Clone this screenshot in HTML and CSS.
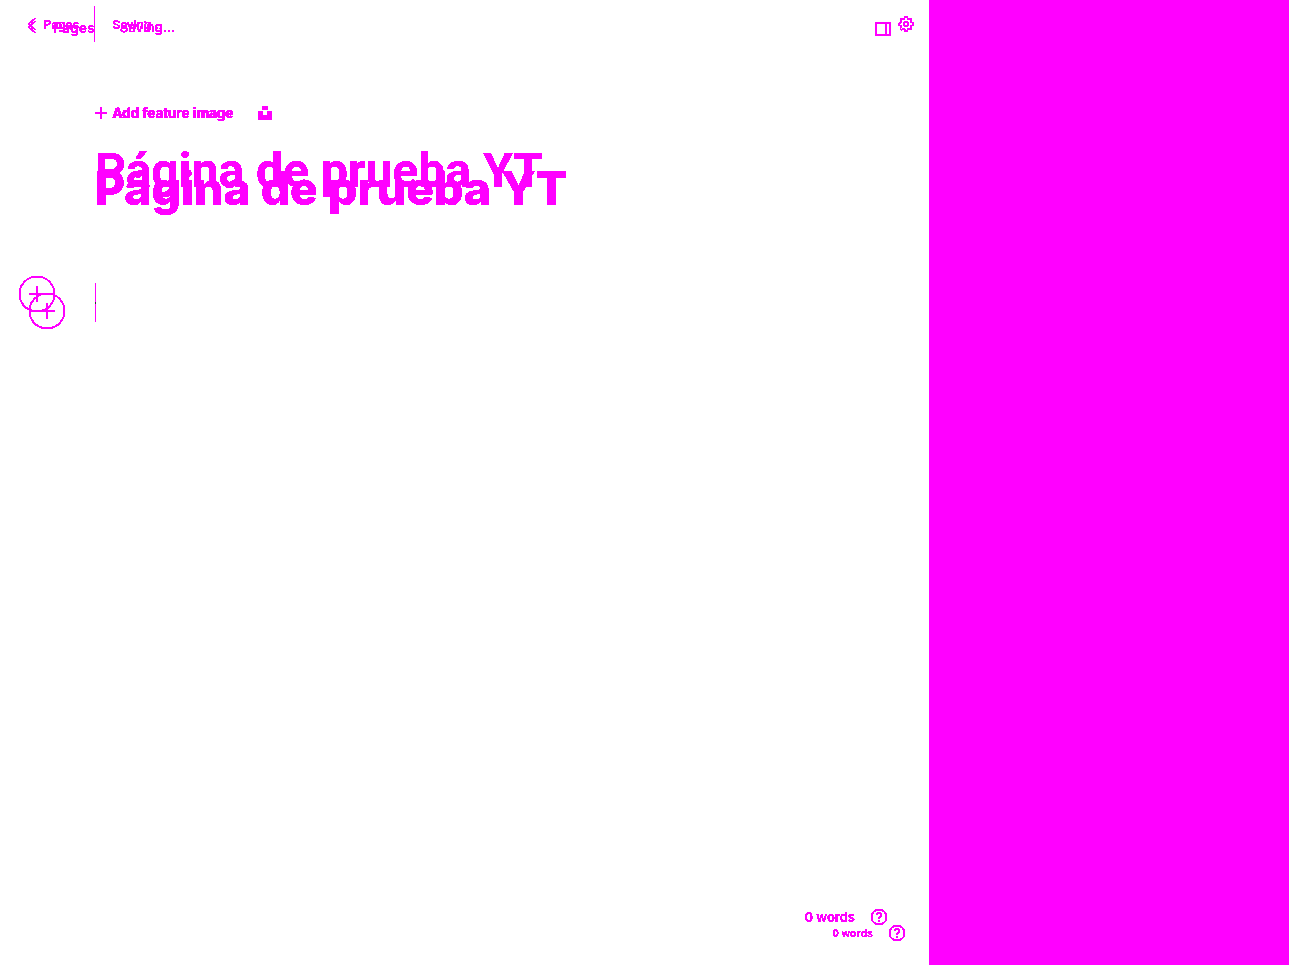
FILE: index.html
```html
<!DOCTYPE html>
<html lang="en">
  <head>
    <meta charset="UTF-8" />
    <title>Página de prueba YT</title>
    <link rel="stylesheet" href="styles.css">
  </head>
  <body>
    <svg class="defs" width="0" height="0">
      <filter id="hard-edge" color-interpolation-filters="sRGB">
        <feComponentTransfer>
          <feFuncA type="discrete" tableValues="0 1 1 1" />
        </feComponentTransfer>
      </filter>
    </svg>
    <main class="editor">
      <!-- first layer -->
      <section class="layer layer-a">
        <header class="topbar">
          <svg class="back" width="10" height="14" viewBox="0 0 10 14"><path d="M8.500 1L1.500 7l7 6" /></svg>
          <span class="crumb">Pages</span>
          <span class="divider"></span>
          <span class="status">Saving...</span>
          <svg class="gear" width="16" height="16" viewBox="0 0 24 24">
            <circle cx="12" cy="12" r="3" />
            <path d="M19.400 15a1.650 1.650 0 0 0 .33 1.820l.06.06a2 2 0 0 1 0 2.830 2 2 0 0 1-2.830 0l-.06-.06a1.650 1.650 0 0 0-1.820-.33 1.650 1.650 0 0 0-1 1.510V21a2 2 0 0 1-2 2 2 2 0 0 1-2-2v-.09A1.650 1.650 0 0 0 9 19.400a1.650 1.650 0 0 0-1.820.33l-.06.06a2 2 0 0 1-2.830 0 2 2 0 0 1 0-2.830l.06-.06a1.650 1.650 0 0 0 .33-1.820 1.650 1.650 0 0 0-1.510-1H3a2 2 0 0 1-2-2 2 2 0 0 1 2-2h.09A1.650 1.650 0 0 0 4.600 9a1.650 1.650 0 0 0-.33-1.820l-.06-.06a2 2 0 0 1 0-2.830 2 2 0 0 1 2.830 0l.06.06a1.650 1.650 0 0 0 1.820.33H9a1.650 1.650 0 0 0 1-1.510V3a2 2 0 0 1 2-2 2 2 0 0 1 2 2v.09a1.650 1.650 0 0 0 1 1.510 1.650 1.650 0 0 0 1.820-.33l.06-.06a2 2 0 0 1 2.830 0 2 2 0 0 1 0 2.830l-.06.06a1.650 1.650 0 0 0-.33 1.820V9a1.650 1.650 0 0 0 1.510 1H21a2 2 0 0 1 2 2 2 2 0 0 1-2 2h-.09a1.650 1.650 0 0 0-1.510 1z" />
          </svg>
        </header>
        <div class="feature">
          <svg class="plus-small" width="12" height="12" viewBox="0 0 12 12"><path d="M6 0v12M0 6h12" /></svg>
          <span class="feature-label">Add feature image</span>
          <svg class="upload" width="14" height="14" viewBox="0 0 14 14"><path d="M4 0h6v4H4zM0 5h5v4h4V5h5v9H0z" /></svg>
        </div>
        <h1 class="title">Página de prueba YT</h1>
        <div class="body-row">
          <svg class="add" width="36" height="36" viewBox="0 0 36 36">
            <circle cx="18" cy="18" r="17.500" />
            <path d="M18 10v16M10 18h16" />
          </svg>
          <span class="caret"></span>
        </div>
        <footer class="foot">
          <span class="words">0 words</span>
          <svg class="help" width="18" height="18" viewBox="0 0 18 18">
            <circle cx="9" cy="9" r="7.500" />
            <path d="M6.800 7a2.200 2.200 0 1 1 3.300 1.900c-.8.5-1.100 1-1.100 1.800" />
            <path d="M9 12.500v1.500" />
          </svg>
        </footer>
      </section>
      <!-- second layer, sits over the first -->
      <section class="layer layer-b">
        <header class="topbar">
          <svg class="back" width="10" height="14" viewBox="0 0 10 14"><path d="M8.500 1L1.500 7l7 6" /></svg>
          <span class="crumb">Pages</span>
          <span class="status">Saving...</span>
          <svg class="sidebar" width="16" height="14" viewBox="0 0 16 14"><path d="M1 1h14v12H1zM11 1v12" /></svg>
        </header>
        <div class="feature">
          <span class="feature-label">Add feature image</span>
        </div>
        <h1 class="title">Página de prueba YT</h1>
        <div class="body-row">
          <svg class="add" width="36" height="36" viewBox="0 0 36 36">
            <circle cx="18" cy="18" r="17.500" />
            <path d="M18 10v16M10 18h16" />
          </svg>
        </div>
        <footer class="foot">
          <span class="words">0 words</span>
          <svg class="help" width="18" height="18" viewBox="0 0 18 18">
            <circle cx="9" cy="9" r="7.500" />
            <path d="M6.800 7a2.200 2.200 0 1 1 3.300 1.900c-.8.5-1.100 1-1.100 1.800" />
            <path d="M9 12.500v1.500" />
          </svg>
        </footer>
      </section>
    </main>
    <aside class="panel"></aside>
  </body>
</html>
```

FILE: styles.css
```css
html,
body {
  height: 100%;
}

body {
  font-family: "Inter", sans-serif;
  background-color: #fff;
  color: #f0f;
  margin: 0;
  display: flex;
  overflow: hidden;
}

.defs {
  position: absolute;
}

.editor {
  position: relative;
  flex: 1;
}

.panel {
  width: 360px;
  background-color: #f0f;
}

.layer {
  position: absolute;
  top: 0;
  left: 0;
  right: 0;
  bottom: 0;
  display: flex;
  flex-direction: column;
  filter: url(#hard-edge);
}

.layer-a {
  font-family: "Roboto", sans-serif;
}

svg path,
svg circle {
  fill: none;
  stroke: #f0f;
  stroke-width: 1.5;
}

.topbar {
  display: flex;
  align-items: center;
}

.crumb,
.status {
  font-weight: 500;
}

.layer-a .topbar {
  height: 36px;
  padding: 6px 15px 0 27px;
  font-size: 13px;
}

.layer-a .crumb {
  margin-left: 6px;
}

.divider {
  width: 1px;
  height: 36px;
  background-color: #f0f;
  margin: 0 17px 0 15px;
}

.layer-a .gear {
  margin-left: auto;
  margin-bottom: 1px;
}

.gear path,
.gear circle {
  stroke-width: 2;
}

.layer-b .topbar {
  height: 36px;
  padding: 9px 38px 0 27px;
  font-size: 14px;
}

.layer-b .crumb {
  margin-left: 16px;
  font-weight: 600;
}

.layer-b .status {
  margin-left: 25px;
  font-size: 13.300px;
}

.layer-b .sidebar {
  margin-left: auto;
  margin-top: 4px;
}

.sidebar path {
  stroke-width: 2;
}

.feature {
  display: flex;
  align-items: center;
  margin: 59px 0 0 95px;
  height: 24px;
  font-size: 14.600px;
  font-weight: 600;
}

.layer-b .feature {
  margin: 56px 0 0 112px;
  font-size: 13.600px;
}

.feature-label {
  margin-left: 6px;
}

.layer-b .feature-label {
  margin-left: 0;
}

.plus-small {
  flex: none;
}

.upload {
  margin-left: 24px;
}

.upload path {
  fill: #f0f;
  stroke: none;
}

.title {
  margin: 0 0 0 95px;
  font-weight: 700;
  line-height: 1.2;
}

.layer-a .title {
  margin-top: 19px;
  font-size: 48px;
  line-height: 53px;
}

.layer-b .title {
  margin-top: 36px;
  font-size: 46.200px;
  line-height: 55px;
  font-weight: 800;
}

.body-row {
  display: flex;
  align-items: flex-start;
}

.layer-a .body-row {
  margin: 79px 0 0 19px;
}

.layer-b .body-row {
  margin: 77px 0 0 29px;
}

.add path {
  stroke-width: 2;
}

.caret {
  width: 1px;
  height: 39px;
  margin: 7px 0 0 40px;
  background: linear-gradient(#f0f 48%, #333 48%, #333 54%, #f0f 54%);
}

.foot {
  display: flex;
  align-items: center;
  justify-content: flex-end;
  margin-top: auto;
}

.words {
  font-weight: 600;
}

.layer-a .foot {
  padding: 0 23px 23px 0;
  font-size: 11.500px;
}

.layer-a .words {
  margin-right: 15px;
}

.layer-b .foot {
  padding: 0 41px 39px 0;
  font-size: 13px;
}

.layer-b .words {
  margin-right: 15px;
}
```
